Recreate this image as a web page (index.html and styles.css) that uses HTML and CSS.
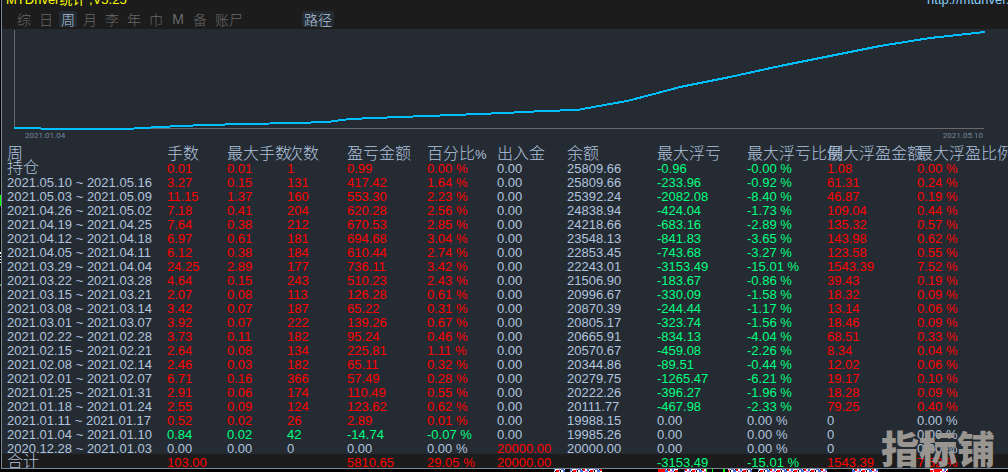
FILE: index.html
```
<!DOCTYPE html>
<html lang="zh-CN">
<head>
  <meta charset="UTF-8">
  <title>MTDriver统计</title>
  <link rel="stylesheet" href="styles.css">
</head>
<body>
  <main class="panel">
    <header class="topbar">
      <div class="title-row">
        <span class="title">MTDriver统计 ,V5.25</span>
        <a class="site" href="http://mtdriver.com">http://mtdriver.com</a>
      </div>
      <nav class="tabs">
        <button>综</button>
        <button>日</button>
        <button class="active">周</button>
        <button>月</button>
        <button>李</button>
        <button>年</button>
        <button>巾</button>
        <button class="mono">M</button>
        <button>备</button>
        <button class="wide">账尸</button>
        <button class="path active">路径</button>
      </nav>
    </header>

    <section class="chart">
      <svg viewBox="0 0 972 101" preserveAspectRatio="none" shape-rendering="crispEdges">
        <path class="axis" d="M0.5 1V99.5H970"/>
        <path class="curve" d="M0 99H26L28 100H111L129 99L146 98L166 97L192 96L231 95L281 94L313 93L336 90L386 88L440 86L490 84L530 82L563 81L585 77L613 72L640 65L666 58L716 48L766 37L826 25L866 17L916 9L971 3"/>
      </svg>
      <div class="dates">
        <span>2021.01.04</span>
        <span>2021.05.10</span>
      </div>
    </section>

    <table class="stats">
      <colgroup>
        <col class="c-date"><col class="c-s"><col class="c-s"><col class="c-s"><col class="c-m"><col class="c-r"><col class="c-r"><col class="c-l"><col class="c-l"><col class="c-m"><col class="c-l"><col>
      </colgroup>
      <thead>
        <tr><th>周</th><th>手数</th><th>最大手数</th><th>次数</th><th>盈亏金额</th><th>百分比<span>%</span></th><th>出入金</th><th>余额</th><th>最大浮亏</th><th>最大浮亏比例</th><th>最大浮盈金额</th><th>最大浮盈比例</th></tr>
      </thead>
      <tbody id="rows"></tbody>
      <tfoot>
        <tr><td class="cn">合计</td><td class="up">103.00</td><td></td><td></td><td class="up">5810.65</td><td class="up">29.05 %</td><td class="up">20000.00</td><td></td><td class="down">-3153.49</td><td class="down">-15.01 %</td><td class="up">1543.39</td><td class="up">7.52 %</td></tr>
      </tfoot>
    </table>
    <div class="watermark">指标铺</div>
  </main>

  <!-- edges of the window behind the panel -->
  <svg class="below" viewBox="0 0 1008 3" preserveAspectRatio="none" shape-rendering="crispEdges">
    <defs>
      <pattern id="bits" width="17" height="3" patternUnits="userSpaceOnUse">
        <path fill="#fff" d="M0 0h17v3H0z"/>
        <path fill="#4169e1" d="M0 0h3v1H0zM2 1h3v2H2zM9 0h2v2H9z"/>
        <path fill="#f00" d="M5 0h2v2H5zM12 1h3v2h-3z"/>
        <path fill="#da70d6" d="M7 2h3v1H7zM15 0h1v2h-1z"/>
        <path fill="#000" d="M4 0h1v1H4zM11 2h1v1h-1zM16 1h1v2h-1z"/>
      </pattern>
    </defs>
    <path fill="url(#bits)" d="M554 0h11v3h-11zM570 0h32v3h-32zM658 0h20v3h-20zM684 0h22v3h-22zM728 0h24v3h-24zM758 0h69v3h-69zM852 0h26v3h-26zM930 0h18v3h-18z"/>
    <path fill="#f00" d="M658 0h7v3h-7zM934 0h6v3h-6z"/>
    <path fill="#0f0" d="M706 0h1v3h-1zM712 0h1v3h-1zM723 0h2v3h-2z"/>
  </svg>
  <svg class="side" viewBox="0 0 1 472" preserveAspectRatio="none" shape-rendering="crispEdges">
    <path fill="#0f0" d="M0 195h1v11H0z"/>
    <path fill="#fff" d="M0 252h1v2H0zM0 256h1v1H0zM0 259h1v1H0zM0 262h1v1H0z"/>
    <path fill="#5f9e6f" d="M0 284h1v2H0z"/>
  </svg>

  <script src="script.js"></script>
</body>
</html>
```
FILE: styles.css
```
body {
  position: relative;
  margin: 0;
  background-color: #000;
  color: #b0c4de;
  font-family: "Liberation Sans", "Noto Sans CJK SC", sans-serif;
  font-size: 13px;
  overflow: hidden;
}

.panel {
  position: relative;
  margin-left: 1px;
  border-left: 1px solid #778899;
  border-bottom: 1px solid #778899;
  background-color: #252b33;
  overflow: hidden;
}

.topbar {
  display: flex;
  flex-direction: column;
  gap: 4px;
  height: 29px;
  background-color: #1c1c1c;
}

.title-row {
  display: flex;
  justify-content: space-between;
  height: 14px;
  margin-top: -7px;
  margin-right: -26px;
  padding-left: 4px;
  line-height: 14px;
}

.title {
  color: #ff0;
}

.site {
  color: #87cefa;
  text-decoration: none;
}

.tabs {
  display: flex;
  gap: 4px;
  padding-left: 13px;
}

.tabs button {
  width: 18px;
  height: 16px;
  padding: 0;
  border: 0;
  border-radius: 2px;
  background: none;
  color: #696969;
  font-family: "Noto Sans CJK SC", sans-serif;
  font-weight: 300;
  font-size: 14px;
  line-height: 16px;
  white-space: nowrap;
}

.tabs .active {
  background-color: #252b33;
  color: #b0c4de;
}

.tabs .mono {
  font-family: "Liberation Sans", sans-serif;
}

.tabs .wide {
  width: 32px;
}

.tabs .path {
  width: 32px;
  margin-left: 53px;
}

.chart svg {
  display: block;
  width: calc(100% - 34px);
  height: 101px;
  margin-left: 12px;
}

.axis {
  fill: none;
  stroke: #696969;
}

.curve {
  fill: none;
  stroke: #00bfff;
  stroke-width: 2;
}

.dates {
  display: flex;
  justify-content: space-between;
  padding: 0 25px 0 23px;
  color: #778899;
  font-family: Roboto, sans-serif;
  font-size: 8px;
  line-height: 11px;
}

.stats {
  width: 100%;
  table-layout: fixed;
  border-collapse: collapse;
  margin-top: 5px;
}

.c-date {
  width: 165px;
}

.c-s {
  width: 60px;
}

.c-r {
  width: 70px;
}

.c-m {
  width: 80px;
}

.c-l {
  width: 90px;
}

.stats th,
.stats td {
  height: 14px;
  padding: 0;
  text-align: left;
  white-space: nowrap;
}

.stats td {
  height: 10px;
  padding-top: 4px;
  line-height: 10px;
}

.stats th:first-child,
.stats td:first-child {
  padding-left: 5px;
}

.stats th,
.stats .cn {
  height: 14px;
  padding-top: 0;
  font-family: "Noto Sans CJK SC", sans-serif;
  font-size: 16px;
  font-weight: 300;
  line-height: 12px;
  vertical-align: top;
}

.stats th span {
  font-family: "Liberation Sans", sans-serif;
  font-size: 13px;
  line-height: 0;
}

.stats .up {
  color: #f00;
}

.stats .down {
  color: #00ff7f;
}

.stats tfoot {
  background-color: #1c1c1c;
}

.watermark {
  position: absolute;
  right: 13px;
  bottom: 0;
  color: #999590;
  font-family: "Noto Sans CJK SC", sans-serif;
  font-size: 38px;
  font-weight: 900;
  line-height: 42px;
}

.below {
  display: block;
  width: 100%;
  height: 3px;
}

.side {
  position: absolute;
  top: 0;
  left: 0;
  width: 1px;
  height: 100%;
}
```
FILE: script.js
```
// period, lots, max lots, count, profit, percent, deposit, balance,
// max float loss, loss %, max float profit, profit %
const data = `持仓|0.01|0.01|1|0.99|0.00 %|0.00|25809.66|-0.96|-0.00 %|1.08|0.00 %
2021.05.10 ~ 2021.05.16|3.27|0.15|131|417.42|1.64 %|0.00|25809.66|-233.96|-0.92 %|61.31|0.24 %
2021.05.03 ~ 2021.05.09|11.15|1.37|160|553.30|2.23 %|0.00|25392.24|-2082.08|-8.40 %|46.87|0.19 %
2021.04.26 ~ 2021.05.02|7.18|0.41|204|620.28|2.56 %|0.00|24838.94|-424.04|-1.73 %|109.04|0.44 %
2021.04.19 ~ 2021.04.25|7.64|0.38|212|670.53|2.85 %|0.00|24218.66|-683.16|-2.89 %|135.32|0.57 %
2021.04.12 ~ 2021.04.18|6.97|0.61|181|694.68|3.04 %|0.00|23548.13|-841.83|-3.65 %|143.98|0.62 %
2021.04.05 ~ 2021.04.11|6.12|0.38|184|610.44|2.74 %|0.00|22853.45|-743.68|-3.27 %|123.58|0.55 %
2021.03.29 ~ 2021.04.04|24.25|2.89|177|736.11|3.42 %|0.00|22243.01|-3153.49|-15.01 %|1543.39|7.52 %
2021.03.22 ~ 2021.03.28|4.64|0.15|243|510.23|2.43 %|0.00|21506.90|-183.67|-0.86 %|39.43|0.19 %
2021.03.15 ~ 2021.03.21|2.07|0.08|113|126.28|0.61 %|0.00|20996.67|-330.09|-1.58 %|18.32|0.09 %
2021.03.08 ~ 2021.03.14|3.42|0.07|187|65.22|0.31 %|0.00|20870.39|-244.44|-1.17 %|13.14|0.06 %
2021.03.01 ~ 2021.03.07|3.92|0.07|222|139.26|0.67 %|0.00|20805.17|-323.74|-1.56 %|18.46|0.09 %
2021.02.22 ~ 2021.02.28|3.73|0.11|182|95.24|0.46 %|0.00|20665.91|-834.13|-4.04 %|68.51|0.33 %
2021.02.15 ~ 2021.02.21|2.64|0.08|134|225.81|1.11 %|0.00|20570.67|-459.08|-2.26 %|8.34|0.04 %
2021.02.08 ~ 2021.02.14|2.46|0.03|182|65.11|0.32 %|0.00|20344.86|-89.51|-0.44 %|12.02|0.06 %
2021.02.01 ~ 2021.02.07|6.71|0.16|366|57.49|0.28 %|0.00|20279.75|-1265.47|-6.21 %|19.17|0.10 %
2021.01.25 ~ 2021.01.31|2.91|0.06|174|110.49|0.55 %|0.00|20222.26|-396.27|-1.96 %|18.28|0.09 %
2021.01.18 ~ 2021.01.24|2.55|0.09|124|123.62|0.62 %|0.00|20111.77|-467.98|-2.33 %|79.25|0.40 %
2021.01.11 ~ 2021.01.17|0.52|0.02|26|2.89|0.01 %|0.00|19988.15|0.00|0.00 %|0|0.00 %
2021.01.04 ~ 2021.01.10|0.84|0.02|42|-14.74|-0.07 %|0.00|19985.26|0.00|0.00 %|0|0.00 %
2020.12.28 ~ 2021.01.03|0.00|0.00|0|0.00|0.00 %|20000.00|20000.00|0.00|0.00 %|0|0.00 %`;

function sign(value) {
  const n = parseFloat(value);
  if (value.startsWith("-")) return "down";
  return n > 0 ? "up" : "";
}

const body = document.getElementById("rows");

data.split("\n").forEach(line => {
  const cells = line.split("|");
  const result = sign(cells[4]);
  const tr = document.createElement("tr");

  cells.forEach((text, i) => {
    const td = document.createElement("td");
    td.textContent = text;
    if (i === 0 && text === "持仓") td.className = "cn";
    // lots, count and profit follow the result of the week
    if (i >= 1 && i <= 5) td.className = result;
    if (i === 6 || i === 8 || i === 9 || i === 10) td.className = sign(text);
    if (i === 11) td.className = sign(cells[10]);
    tr.appendChild(td);
  });

  body.appendChild(tr);
});
```
